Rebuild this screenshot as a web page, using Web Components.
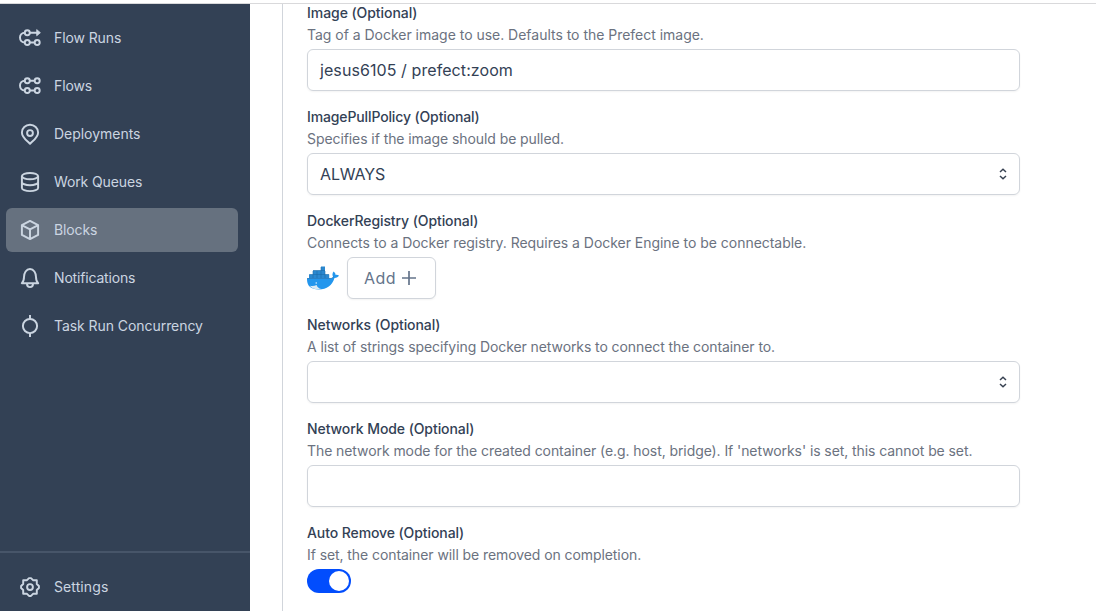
<!DOCTYPE html>
<html lang="en">
<head>
<meta charset="utf-8">
<title>Blocks</title>
<style>
html, body { margin: 0; height: 100%; overflow: hidden; background: #fff; font-family: Inter, "Liberation Sans", sans-serif; }
</style>
</head>
<body>
<app-shell>
  <side-bar slot="nav">
    <nav-item icon="runs" ls="-0.1">Flow Runs</nav-item>
    <nav-item icon="flows" ls="-0.1">Flows</nav-item>
    <nav-item icon="pin" ls="-0.03">Deployments</nav-item>
    <nav-item icon="db" ls="-0.12">Work Queues</nav-item>
    <nav-item icon="cube" ls="-0.12" active>Blocks</nav-item>
    <nav-item icon="bell" ls="-0.17">Notifications</nav-item>
    <nav-item icon="commit" ls="-0.06">Task Run Concurrency</nav-item>
    <nav-item icon="gear" ls="0.1" slot="footer">Settings</nav-item>
  </side-bar>
  <form-field style="--label-ls:-.06px;--hint-ls:-.02px" label="Image (Optional)" hint="Tag of a Docker image to use. Defaults to the Prefect image."><text-box style="--ls:.08px">jesus6105 / prefect:zoom</text-box></form-field>
  <form-field style="--label-ls:-.13px;--hint-ls:-.08px" label="ImagePullPolicy (Optional)" hint="Specifies if the image should be pulled."><text-box select style="--ls:-.12px">ALWAYS</text-box></form-field>
  <form-field style="--label-ls:-.09px;--hint-ls:-.035px" label="DockerRegistry (Optional)" hint="Connects to a Docker registry. Requires a Docker Engine to be connectable."><block-picker>Add</block-picker></form-field>
  <form-field style="--label-ls:-.08px;--hint-ls:-.09px" label="Networks (Optional)" hint="A list of strings specifying Docker networks to connect the container to."><text-box select></text-box></form-field>
  <form-field style="--label-ls:-.08px;--hint-ls:-.08px" label="Network Mode (Optional)" hint="The network mode for the created container (e.g. host, bridge). If 'networks' is set, this cannot be set."><text-box></text-box></form-field>
  <form-field style="--label-ls:-.09px;--hint-ls:-.08px" label="Auto Remove (Optional)" hint="If set, the container will be removed on completion."><toggle-switch></toggle-switch></form-field>
</app-shell>
<script>
class Base extends HTMLElement {
  constructor() { super(); this.attachShadow({ mode: 'open' }); }
  connectedCallback() { this.shadowRoot.innerHTML = this.view(); }
}
const ICONS = {
  runs: '<circle cx="9.300" cy="6.700" r="2.500"/><circle cx="9.300" cy="16.500" r="2.500"/><circle cx="19.200" cy="16.500" r="2.500"/><path d="M6.800 6.700C3.800 6.700 2 8.900 2 11.600s1.800 4.900 4.800 4.900M11.800 6.700H19M11.800 16.500h4.900"/><path d="M18.700 3.600 22.400 6.700l-3.700 3.100z" fill="currentColor" stroke-width=".8"/>',
  flows: '<circle cx="9.300" cy="6.700" r="2.500"/><circle cx="19.200" cy="6.700" r="2.500"/><circle cx="9.300" cy="16.500" r="2.500"/><circle cx="19.200" cy="16.500" r="2.500"/><path d="M6.800 6.700C3.800 6.700 2 8.900 2 11.600s1.800 4.900 4.800 4.900M11.800 6.700h4.900M11.800 16.500h4.900"/>',
  pin: '<path d="M12 21.800c-1.800-2.200-8.100-5.800-8.100-11.300a8.100 7.700 0 0 1 16.200 0c0 5.500-6.300 9.100-8.100 11.300z"/><circle cx="12" cy="11" r="2.900"/>',
  db: '<ellipse cx="12" cy="6.100" rx="8.100" ry="3.200"/><path d="M3.900 6.100v11.800c0 1.800 3.600 3.200 8.100 3.200s8.100-1.400 8.100-3.200V6.100M3.900 12c0 1.800 3.600 3.200 8.100 3.200s8.100-1.400 8.100-3.200"/>',
  cube: '<path d="m12 2.900 8.100 4.200v9.800L12 21.100l-8.100-4.200V7.100zM4.200 7.300 12 11.300l7.800-4M12 11.300V21"/>',
  bell: '<path d="M3.800 17.200h16.400c-1.500-1.300-2.200-3.300-2.200-6.200 0-3.900-2.300-8-6-8s-6 4.100-6 8c0 2.900-.7 4.900-2.200 6.200zM9 17.500v.6a3 3 0 0 0 6 0v-.6"/>',
  commit: '<circle cx="12" cy="12" r="7.100"/><path d="M12 1v3.900M12 19.100V23"/>',
  gear: '<path d="M11 3.100h2L15 5.200h3.800V9L20.900 11v2L18.800 15v3.800H15L13 20.900h-2L9 18.800H5.200V15L3.100 13v-2L5.200 9V5.200H9z"/><circle cx="12" cy="12" r="2.900"/>'
};
customElements.define('app-shell', class extends Base {
  view() { return `<style>
    :host { display: grid; grid-template: 1px minmax(0, 1fr) / 250px 1fr; height: 100vh; box-sizing: border-box; padding-top: 3px; }
    .rule { background: #d9d9db; grid-column: 1 / 3; }
    main { margin-left: 32px; border-left: 1px solid #d1d5db; padding: 0 76px 0 24px; min-height: 0; }
    .fields { display: flex; flex-direction: column; gap: 16px; margin-top: -1px; }
  </style><div class="rule"></div><slot name="nav"></slot><main><div class="fields"><slot></slot></div></main>`; }
});
customElements.define('side-bar', class extends Base {
  view() { return `<style>
    :host { display: flex; flex-direction: column; background: #334155; color: #cbd5e1; min-height: 0; }
    nav { display: flex; flex-direction: column; gap: 4px; padding: 12px 12px 0 6px; flex: 1; }
    footer { border-top: 2px solid #475569; padding: 12px 12px 2px 6px; }
  </style><nav><slot></slot></nav><footer><slot name="footer"></slot></footer>`; }
});
customElements.define('nav-item', class extends Base {
  view() { return `<style>
    :host { display: flex; align-items: center; height: 44px; box-sizing: border-box; padding-left: 12px; gap: 12px; border-radius: 6px; font-size: 14px; letter-spacing: ${this.getAttribute('ls')}px; white-space: nowrap; }
    :host([active]) { background: #66717f; }
    span { padding-bottom: 1px; }
    svg { width: 24px; height: 24px; fill: none; stroke: currentColor; stroke-width: 1.95; stroke-linejoin: round; }
  </style><svg viewBox="0 0 24 24">${ICONS[this.getAttribute('icon')]}</svg><span><slot></slot></span>`; }
});
customElements.define('form-field', class extends Base {
  view() { return `<style>
    :host { display: block; height: 88px; white-space: nowrap; font-size: 14px; line-height: 20px; }
    .label { color: #334155; font-weight: 500; letter-spacing: var(--label-ls, 0); }
    .hint { color: #6b7280; margin: 2px 0 4px; letter-spacing: var(--hint-ls, 0); }
  </style><div class="label"><span>${this.getAttribute('label')}</span></div><div class="hint"><span>${this.getAttribute('hint')}</span></div><slot></slot>`; }
});
customElements.define('text-box', class extends Base {
  view() { return `<style>
    :host { display: flex; align-items: center; justify-content: space-between; height: 42px; box-sizing: border-box; border: 1px solid #d1d5db; border-radius: 6px; padding: 0 11px 0 12px; color: #334155; font-size: 16px; letter-spacing: var(--ls, 0); box-shadow: 0 1px 2px rgba(0,0,0,.05); }
    svg { width: 10px; height: 14px; fill: none; stroke: #374151; stroke-width: 1.5; }
  </style><span><slot></slot></span>${this.hasAttribute('select') ? '<svg viewBox="0 0 10 14"><path d="M2 5 5 2.300l3 2.700M2 9l3 2.700 3-2.700"/></svg>' : ''}`; }
});
customElements.define('block-picker', class extends Base {
  view() { return `<style>
    :host { display: flex; align-items: center; gap: 8px; }
    .logo { width: 32px; height: 32px; }
    button { display: flex; align-items: center; gap: 5px; width: 89px; height: 42px; box-sizing: border-box; padding: 0 0 0 16px; border: 1px solid #d1d5db; border-radius: 6px; background: #fff; color: #64748b; font: 16px Inter, sans-serif; letter-spacing: .4px; box-shadow: 0 1px 2px rgba(0,0,0,.05); }
    .plus { width: 16px; height: 16px; stroke: currentColor; stroke-width: 1.700; }
  </style>
  <svg class="logo" viewBox="0 0 32 32">
    <path d="M2 12.500h4v-4h8v-4h4v8h4.200v4H2z" fill="#2b88cf"/>
    <path d="M2.300 12.500H22M6 8.500h12M6 9v7M10 9v7M14 5v11M18 9v7" stroke="#1b6bab" stroke-width=".6" fill="none"/>
    <path d="M0 16.200h23.200c1.500 0 2.400-.5 2.900-1.500-1-1.700-.8-3.500.4-5.100 1.300.9 2 2 2.100 3.300 1.300-.2 2.400 0 3.400.7-.8 1.600-2.200 2.300-4.500 2.400C25 23.500 20 27.400 11.800 27.400 3.500 27.400-.3 23.800 0 16.200z" fill="#2396ed"/>
    <path d="M2.800 23.800c2.600.6 4.800.2 6.800-.8.6 2 2.200 3.500 4.600 4.100-5.200.8-9.200-.2-11.400-3.300z" fill="#dbe9f3"/>
    <path d="M.2 16.500h23c2 0 3-1 3.200-2" stroke="#2373b5" stroke-width=".7" fill="none"/>
    <circle cx="9.200" cy="21" r=".7" fill="#fff"/>
  </svg>
  <button type="button"><span><slot></slot></span><svg class="plus" viewBox="0 0 16 16"><path d="M8 1v14M1 8h14"/></svg></button>`; }
});
customElements.define('toggle-switch', class extends Base {
  view() { return `<style>
    :host { display: flex; justify-content: flex-end; width: 44px; height: 24px; box-sizing: border-box; padding: 2px; border-radius: 12px; background: #024dfd; }
    i { width: 20px; height: 20px; border-radius: 50%; background: #fff; }
  </style><i></i>`; }
});
</script>
</body>
</html>
